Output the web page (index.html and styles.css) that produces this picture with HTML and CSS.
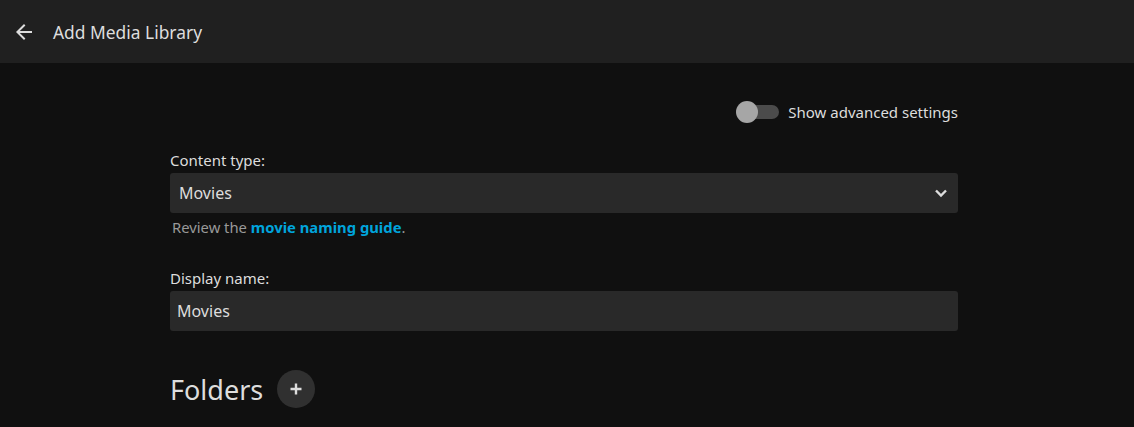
FILE: index.html
```html
<!DOCTYPE html>
<html>
<head>
<meta charset="utf-8">
<link rel="stylesheet" href="styles.css">
</head>
<body>
<header class="header">
  <button class="back" aria-label="Back">
    <svg width="24" height="24" viewBox="0 0 24 24"><path d="M20 11H7.83l5.59-5.59L12 4l-8 8 8 8 1.41-1.41L7.83 13H20v-2z" fill="currentColor"/></svg>
  </button>
  <h1 class="title">Add Media Library</h1>
</header>
<main class="content">
  <div class="form">
    <div class="advanced">
      <span class="toggle"><span class="track"></span><span class="thumb"></span></span>
      <span class="adv-label">Show advanced settings</span>
    </div>
    <div class="field">
      <label class="label">Content type:</label>
      <div class="select">
        <span class="select-value">Movies</span>
        <svg class="chev" width="14" height="10" viewBox="0 0 14 10"><path d="M2 2.5l5 5 5-5" fill="none" stroke="currentColor" stroke-width="2.4"/></svg>
      </div>
      <div class="help">Review the <a class="link" href="#">movie naming guide</a>.</div>
    </div>
    <div class="field field2">
      <label class="label">Display name:</label>
      <div class="input">Movies</div>
    </div>
    <div class="folders">
      <h2 class="folders-title">Folders</h2>
      <button class="add" aria-label="Add">
        <svg width="14" height="14" viewBox="0 0 14 14"><path d="M7 1.5v11M1.5 7h11" stroke="currentColor" stroke-width="2.4"/></svg>
      </button>
    </div>
  </div>
</main>
</body>
</html>
```
FILE: styles.css
```css
html, body {
  margin: 0;
  padding: 0;
  background: #101010;
  color: #dddddd;
  font-family: "Noto Sans", "Open Sans", sans-serif;
  height: 100%;
  overflow: hidden;
}
.header {
  height: 63px;
  background: #202020;
  display: flex;
  align-items: center;
}
.back {
  background: none;
  border: 0;
  color: #dddddd;
  padding: 0;
  margin-left: 12px;
  width: 24px;
  height: 24px;
  display: flex;
}
.title {
  margin: 0 0 0 17px;
  font-size: 17.4px;
  font-weight: 400;
  color: #dddddd;
}
.content {
  display: flex;
  justify-content: center;
}
.form {
  width: 788px;
  margin-left: -6px;
  padding-top: 37px;
}
.advanced {
  display: flex;
  justify-content: flex-end;
  align-items: center;
  gap: 9px;
  height: 24px;
}
.toggle {
  position: relative;
  width: 43px;
  height: 22px;
  display: block;
}
.track {
  position: absolute;
  left: 4px;
  right: 0;
  top: 4px;
  height: 14px;
  border-radius: 7px;
  background: #4b4b4b;
}
.thumb {
  position: absolute;
  left: 0;
  top: 0;
  width: 22px;
  height: 22px;
  border-radius: 50%;
  background: #a6a6a6;
}
.adv-label {
  font-size: 15px;
  color: #dddddd;
}
.field {
  margin-top: 26px;
}
.label {
  display: block;
  font-size: 15px;
  color: #dddddd;
  line-height: 20px;
  margin-bottom: 3px;
}
.select, .input {
  height: 40px;
  background: #292929;
  border-radius: 3px;
  display: flex;
  align-items: center;
  font-size: 16px;
  color: #dddddd;
  box-sizing: border-box;
}
.select {
  padding: 0 10px 0 9px;
  justify-content: space-between;
}
.chev {
  color: #dddddd;
}
.input {
  padding: 0 7px;
}
.help {
  font-size: 14.8px;
  color: #999999;
  margin-top: 4px;
  padding-left: 2px;
  line-height: 20px;
}
.link {
  color: #00a4dc;
  font-weight: 700;
  text-decoration: none;
}
.field2 {
  margin-top: 31px;
}
.folders {
  display: flex;
  align-items: center;
  gap: 14px;
  margin-top: 39px;
}
.folders-title {
  margin: 0;
  font-size: 27px;
  font-weight: 400;
  color: #dddddd;
}
.add {
  width: 38px;
  height: 38px;
  border-radius: 50%;
  border: 0;
  background: #303030;
  color: #dddddd;
  display: flex;
  align-items: center;
  justify-content: center;
  padding: 0;
}
```
